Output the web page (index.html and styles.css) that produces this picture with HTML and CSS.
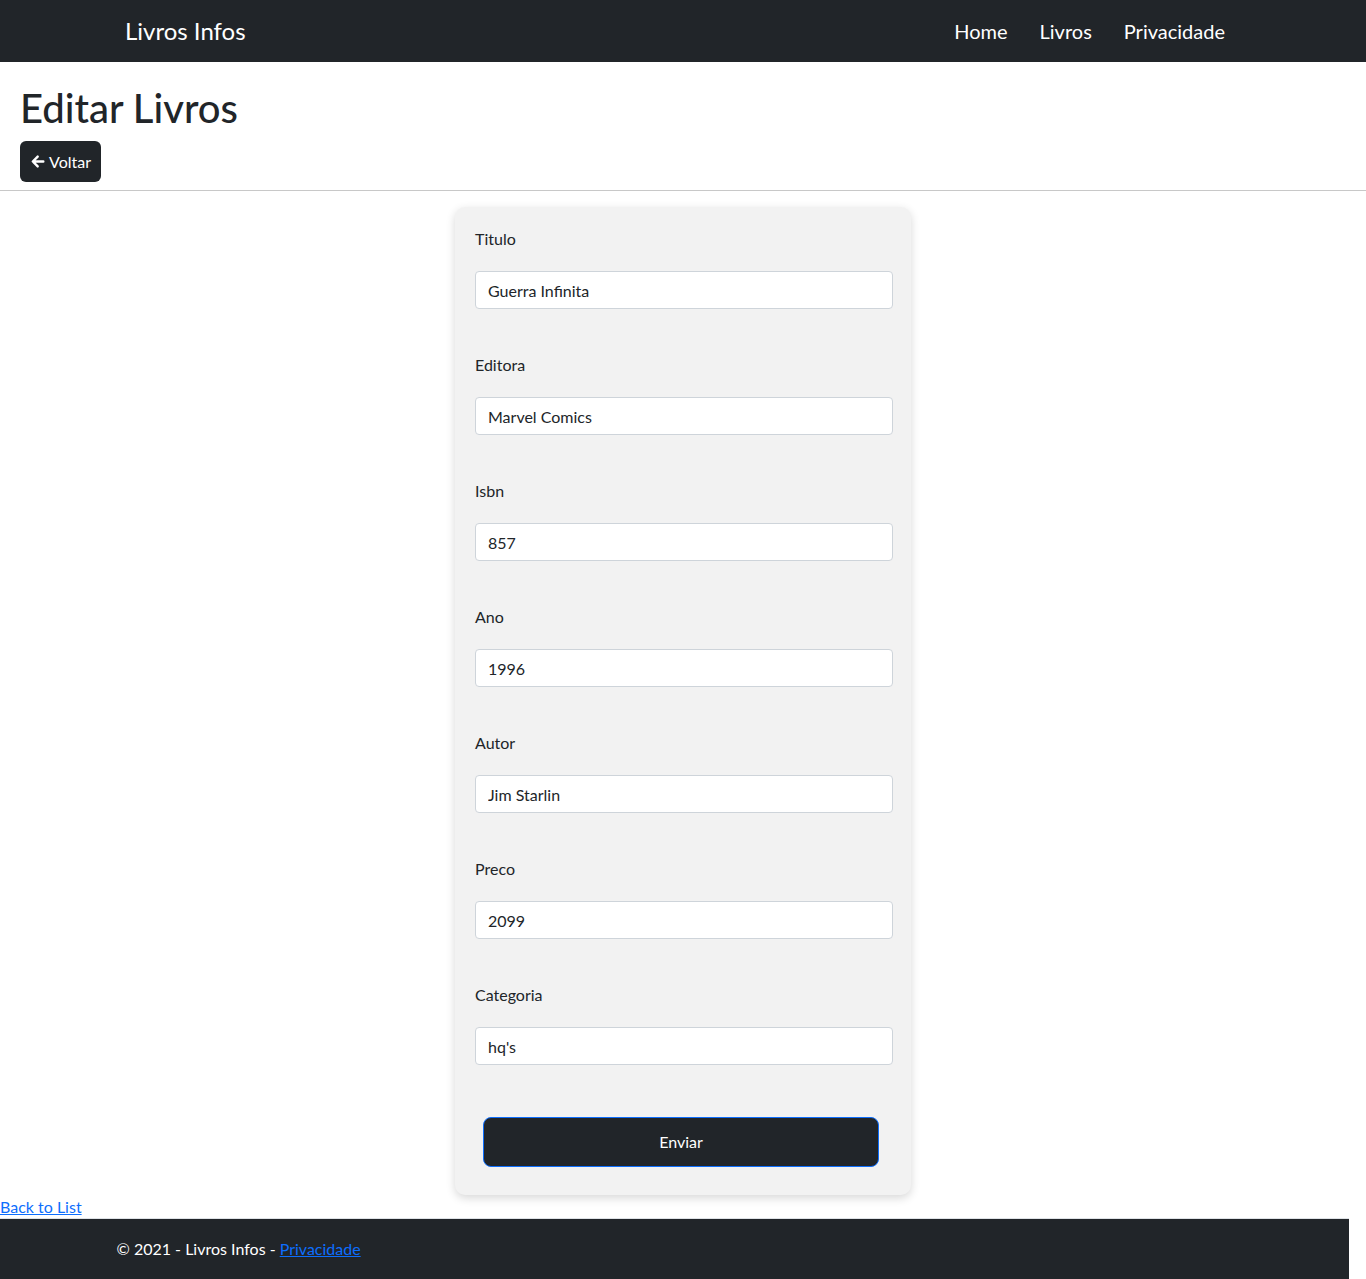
FILE: index.html
```html
<!DOCTYPE html>
<html lang="pt-br">
<head>
<meta charset="utf-8">
<title>Editar Livros - Livros Infos</title>
<link rel="stylesheet" href="styles.css">
</head>
<body>
<header class="navbar">
  <div class="container nav-inner">
    <a class="brand" href="#">Livros Infos</a>
    <nav class="nav-links">
      <a class="nav-link" href="#">Home</a>
      <a class="nav-link" href="#">Livros</a>
      <a class="nav-link" href="#">Privacidade</a>
    </nav>
  </div>
</header>

<div class="page-head">
  <h1 class="title">Editar Livros</h1>
  <a class="btn-back" href="#">
    <svg class="arrow" viewBox="0 0 16 16" width="15" height="15" aria-hidden="true">
      <path d="M14.2 8H3.2M8.2 2.8L3 8l5.2 5.2" fill="none" stroke="#fff" stroke-width="2.6" stroke-linecap="round" stroke-linejoin="round"/>
    </svg>
    <span>Voltar</span>
  </a>
</div>
<hr class="divider">

<main class="main">
  <form class="card">
    <div class="group">
      <label class="label">Titulo</label>
      <input class="input" type="text" value="Guerra Infinita">
    </div>
    <div class="group">
      <label class="label">Editora</label>
      <input class="input" type="text" value="Marvel Comics">
    </div>
    <div class="group">
      <label class="label">Isbn</label>
      <input class="input" type="text" value="857">
    </div>
    <div class="group">
      <label class="label">Ano</label>
      <input class="input" type="text" value="1996">
    </div>
    <div class="group">
      <label class="label">Autor</label>
      <input class="input" type="text" value="Jim Starlin">
    </div>
    <div class="group">
      <label class="label">Preco</label>
      <input class="input" type="text" value="2099">
    </div>
    <div class="group last">
      <label class="label">Categoria</label>
      <input class="input" type="text" value="hq's">
    </div>
    <button class="btn-submit" type="button">Enviar</button>
  </form>
</main>

<div class="back"><a href="#">Back to List</a></div>

<footer class="footer">
  <div class="container footer-inner">© 2021 - Livros Infos - <a href="#">Privacidade</a></div>
</footer>
</body>
</html>
```

FILE: styles.css
```css
* { box-sizing: border-box; }

html, body {
  margin: 0;
  padding: 0;
}

body {
  font-family: "Lato", "Noto Sans", sans-serif;
  font-size: 16px;
  line-height: 1.5;
  color: #212529;
  background: #fff;
}

.container {
  width: 1140px;
  margin: 0 auto;
  padding: 0 12px;
}

.navbar {
  background: #212529;
  padding: 8px 0;
}

.nav-inner {
  display: flex;
  align-items: center;
  justify-content: space-between;
}

.brand {
  color: #fff;
  text-decoration: none;
  font-size: 24px;
  line-height: 36px;
  padding: 5px 0;
}

.nav-links {
  display: flex;
}

.nav-link {
  color: #fff;
  text-decoration: none;
  font-size: 20px;
  line-height: 30px;
  padding: 0 16px;
}

.page-head {
  padding: 22px 20px 0;
}

.title {
  margin: 0 0 9px;
  font-size: 40px;
  font-weight: 500;
  line-height: 48px;
}

.btn-back {
  display: inline-flex;
  align-items: center;
  gap: 4px;
  height: 41px;
  padding: 0 10px;
  background: #212529;
  color: #fff;
  text-decoration: none;
  border-radius: 6px;
  font-size: 16px;
}

.divider {
  margin: 8px 0 0;
  border: 0;
  border-top: 1px solid #c8c8c8;
}

.main {
  display: flex;
  justify-content: center;
  padding-top: 16px;
}

.card {
  width: 456px;
  background: #f2f2f2;
  border-radius: 10px;
  padding: 20px 18px 28px 20px;
  box-shadow: 0 3px 10px rgba(0, 0, 0, 0.16);
}

.group {
  display: flex;
  flex-direction: column;
  margin-bottom: 44px;
}

.group.last { margin-bottom: 52px; }

.label {
  line-height: 24px;
  margin-bottom: 20px;
}

.input {
  height: 38px;
  border: 1px solid #ced4da;
  border-radius: 4px;
  padding: 6px 12px;
  background: #fff;
  color: #212529;
  font: inherit;
}

.btn-submit {
  display: block;
  width: 396px;
  height: 50px;
  margin-left: 8px;
  background: #212529;
  color: #fff;
  border: 1px solid #0d6efd;
  border-radius: 8px;
  font: inherit;
}

.back {
  height: 23px;
  line-height: 23px;
}

.back a,
.footer a {
  color: #0d6efd;
  text-decoration: underline;
}

.footer {
  margin-right: 17px;
  background: #212529;
  border-top: 1px solid #dee2e6;
  color: #fff;
  line-height: 60px;
}

.footer-inner {
  width: 1140px;
}
```
